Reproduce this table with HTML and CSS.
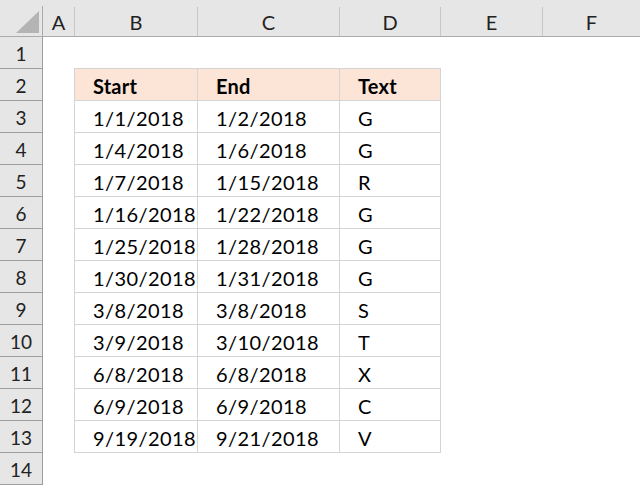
FILE: index.html
```html
<!DOCTYPE html>
<html>
<head>
<meta charset="utf-8">
<link rel="stylesheet" href="styles.css">
</head>
<body>
<div class="sheet">
  <div class="colbar">
    <div class="corner"><div class="corner-box"><svg class="tri" width="23" height="22" viewBox="0 0 23 22"><polygon points="23,0 23,22 0,22" fill="#b4b4b4"/></svg></div></div>
    <div class="colhead w-a"><span class="lbl">A</span></div>
    <div class="colhead w-b"><span class="lbl">B</span></div>
    <div class="colhead w-c"><span class="lbl">C</span></div>
    <div class="colhead w-d"><span class="lbl">D</span></div>
    <div class="colhead w-e"><span class="lbl">E</span></div>
    <div class="colhead w-f"><span class="lbl">F</span></div>
  </div>
  <div class="body">
    <div class="rowheads">
      <div class="rh">1</div><div class="rh">2</div><div class="rh">3</div><div class="rh">4</div>
      <div class="rh">5</div><div class="rh">6</div><div class="rh">7</div><div class="rh">8</div>
      <div class="rh">9</div><div class="rh">10</div><div class="rh">11</div><div class="rh">12</div>
      <div class="rh">13</div><div class="rh">14</div>
    </div>
    <div class="cells">
      <div class="table">
        <div class="c th">Start</div><div class="c th">End</div><div class="c th">Text</div>
        <div class="c">1/1/2018</div><div class="c">1/2/2018</div><div class="c">G</div>
        <div class="c">1/4/2018</div><div class="c">1/6/2018</div><div class="c">G</div>
        <div class="c">1/7/2018</div><div class="c">1/15/2018</div><div class="c">R</div>
        <div class="c">1/16/2018</div><div class="c">1/22/2018</div><div class="c">G</div>
        <div class="c">1/25/2018</div><div class="c">1/28/2018</div><div class="c">G</div>
        <div class="c">1/30/2018</div><div class="c">1/31/2018</div><div class="c">G</div>
        <div class="c">3/8/2018</div><div class="c">3/8/2018</div><div class="c">S</div>
        <div class="c">3/9/2018</div><div class="c">3/10/2018</div><div class="c">T</div>
        <div class="c">6/8/2018</div><div class="c">6/8/2018</div><div class="c">X</div>
        <div class="c">6/9/2018</div><div class="c">6/9/2018</div><div class="c">C</div>
        <div class="c">9/19/2018</div><div class="c">9/21/2018</div><div class="c">V</div>
      </div>
    </div>
  </div>
</div>
</body>
</html>
```
FILE: styles.css
```css
* { box-sizing: border-box; }
html, body { margin: 0; padding: 0; background: #fff; }
body { width: 640px; height: 485px; overflow: hidden; font-family: Lato, "Liberation Sans", sans-serif; color: #000; }
.sheet { display: flex; flex-direction: column; width: 640px; }
.colbar { display: flex; height: 37px; background: #e6e6e6; border-bottom: 1px solid #ababab; }
.corner { width: 43px; padding-top: 6px; }
.corner-box { height: 30px; border-right: 1px solid #ababab; display: flex; align-items: flex-end; justify-content: flex-end; padding: 0 3px 3px 0; }
.tri { display: block; }
.colhead { padding-top: 7px; }
.lbl { display: flex; height: 29px; align-items: center; justify-content: center; border-right: 1px solid #c6c6c6; font-size: 20px; color: #222; padding-top: 1px; }
.w-a { width: 32px; }
.w-b { width: 123px; }
.w-c { width: 142px; }
.w-d { width: 101px; }
.w-e { width: 102px; }
.w-f { flex: 1; }
.w-f .lbl { border-right: none; }
.body { display: flex; }
.rowheads { width: 43px; display: flex; flex-direction: column; background: #e6e6e6; border-right: 1px solid #9e9e9e; }
.rh { height: 32px; border-bottom: 1px solid #9e9e9e; display: flex; align-items: center; justify-content: center; font-size: 19px; color: #222; padding-top: 2px; }
.cells { flex: 1; padding: 31px 0 0 31px; }
.table { display: grid; grid-template-columns: 123px 142px 101px; grid-auto-rows: 32px; width: 367px; border-top: 1px solid #d4d4d4; border-left: 1px solid #d4d4d4; }
.c { border-right: 1px solid #d4d4d4; border-bottom: 1px solid #d4d4d4; display: flex; align-items: center; padding: 3px 0 0 18px; font-size: 20px; letter-spacing: 0.4px; white-space: nowrap; overflow: hidden; }
.th { background: #fce4d6; font-weight: bold; letter-spacing: 0.2px; }
```
